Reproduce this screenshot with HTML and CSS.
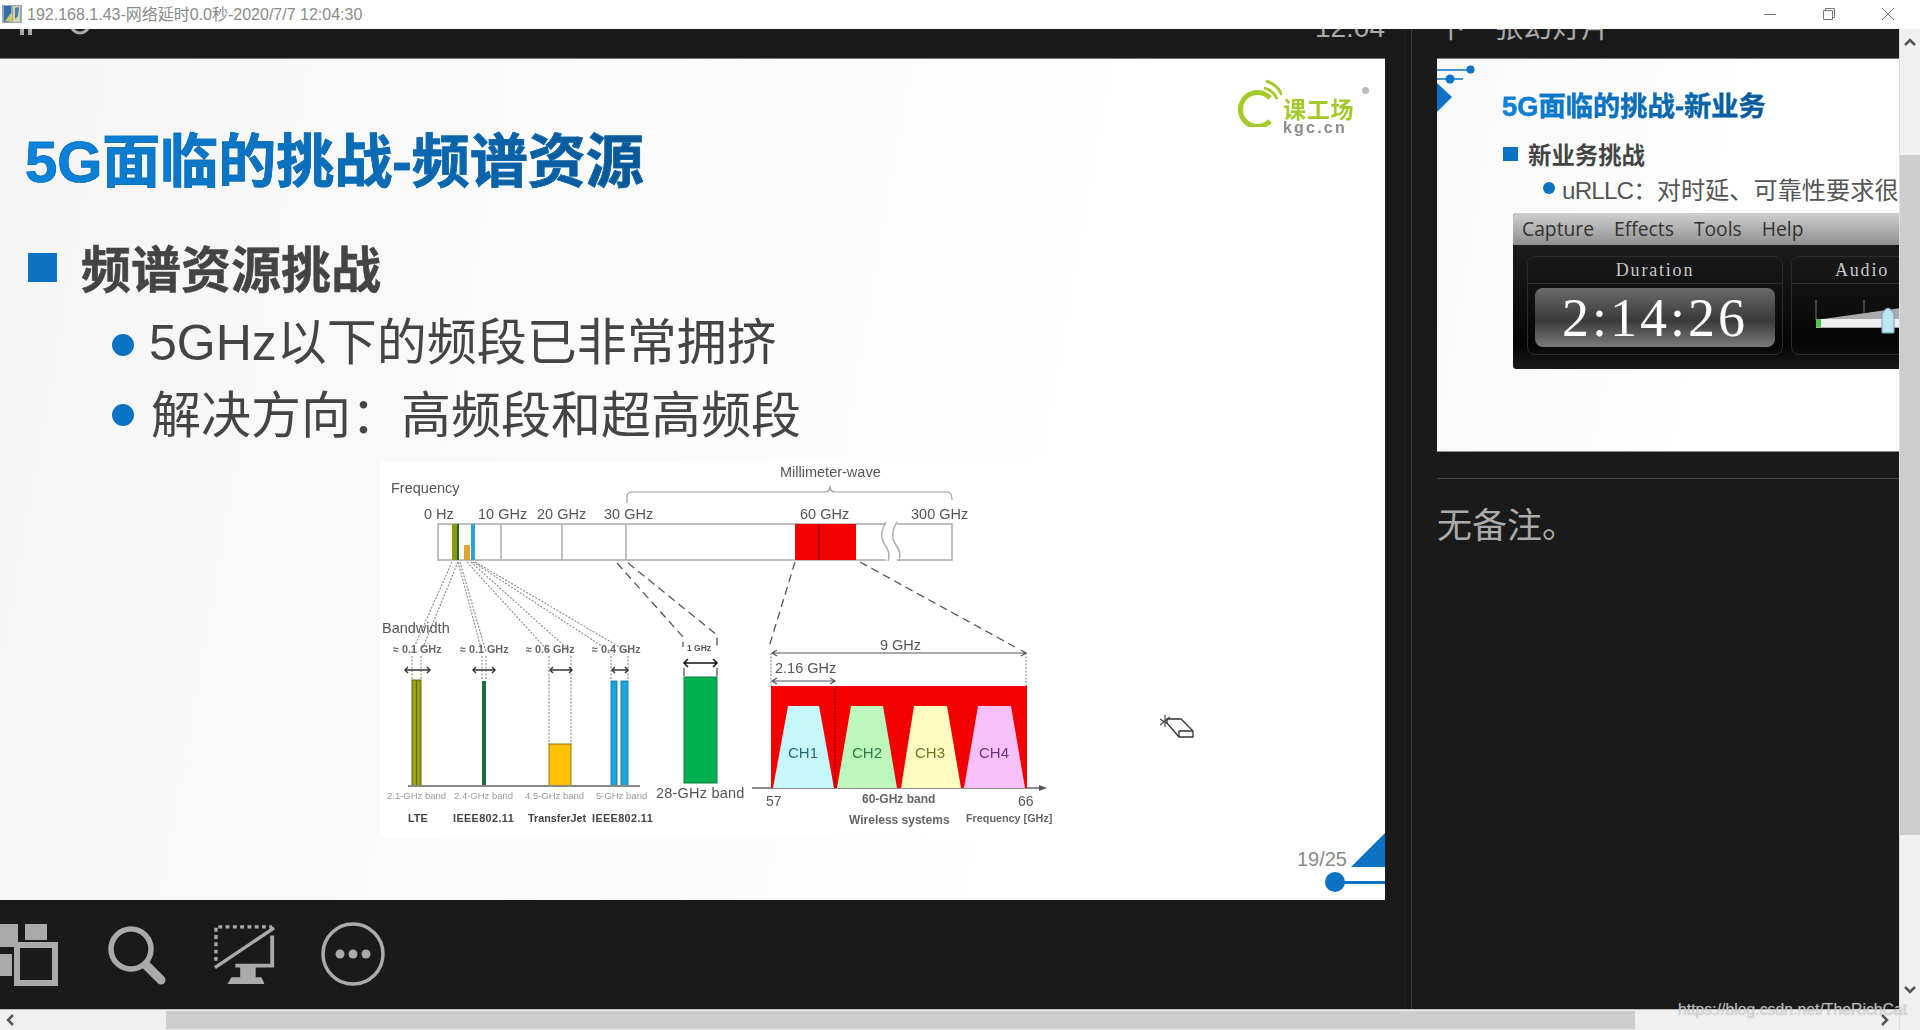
FILE: index.html
```html
<!DOCTYPE html>
<html lang="zh-CN">
<head>
<meta charset="utf-8">
<title>192.168.1.43-网络延时0.0秒-2020/7/7 12:04:30</title>
<link rel="stylesheet" href="styles.css">
</head>
<body>
<div class="window">
  <header class="titlebar">
    <svg class="app-icon" viewBox="0 0 20 20" width="20" height="20">
      <rect x="0" y="1" width="20" height="18" fill="#9aa7b5"/>
      <rect x="2" y="2" width="7" height="16" fill="#2f6ea8"/>
      <path d="M3 17 L9 9 L11 12 L9 18 Z" fill="#d8c860"/>
      <rect x="11" y="2" width="7" height="16" fill="#cfd6a8"/>
      <path d="M13 4 L17 3 L16 12 L13 15 Z" fill="#4d7fb5"/>
    </svg>
    <span class="window-title">192.168.1.43-网络延时0.0秒-2020/7/7 12:04:30</span>
    <div class="window-controls">
      <svg viewBox="0 0 14 14" width="14" height="14"><path d="M1 7.5H13" class="ctl"/></svg>
      <svg viewBox="0 0 14 14" width="14" height="14"><path d="M1.5 3.5H10.5V12.5H1.5Z M3.5 3.5V1.5H12.5V10.5H10.5" class="ctl"/></svg>
      <svg viewBox="0 0 14 14" width="14" height="14"><path d="M1 1L13 13M13 1L1 13" class="ctl"/></svg>
    </div>
  </header>

  <main class="app">
    <section class="stage">
      <div class="strip">
        <svg class="strip-icons" viewBox="0 0 100 29" width="100" height="29">
          <rect x="20" y="0" width="4" height="6" fill="#aaa"/>
          <rect x="28" y="0" width="4" height="6" fill="#aaa"/>
          <circle cx="80" cy="-5" r="9" fill="none" stroke="#aaa" stroke-width="3"/>
        </svg>
        <span class="clock">12:04</span>
      </div>

      <article class="slide">
        <div class="slide-text">
          <h1 class="slide-title">5G面临的挑战-频谱资源</h1>
          <h2 class="slide-heading"><i class="square"></i>频谱资源挑战</h2>
          <p class="slide-bullet"><i class="dot"></i><span class="tight">5GHz以下的频段已非常拥挤</span></p>
          <p class="slide-bullet"><i class="dot"></i><span>解决方向：高频段和超高频段</span></p>
        </div>

        <svg class="diagram" viewBox="380 460 700 380" width="700" height="380">
          <rect x="380" y="462" width="690" height="375" fill="#fff"/>

          <text x="391" y="493" class="d15">Frequency</text>
          <text x="424" y="519" class="d15">0 Hz</text>
          <text x="478" y="519" class="d15">10 GHz</text>
          <text x="537" y="519" class="d15">20 GHz</text>
          <text x="604" y="519" class="d15">30 GHz</text>
          <text x="800" y="519" class="d15">60 GHz</text>
          <text x="911" y="519" class="d15">300 GHz</text>
          <text x="780" y="477" class="d15">Millimeter-wave</text>

          <path d="M627 503V497Q627 492 632 492H825Q830 492 830 486Q830 492 835 492H947Q952 492 952 500" fill="none" stroke="#999" stroke-width="1.2"/>

          <rect x="438" y="524" width="514" height="36" fill="#fff" stroke="#aaa" stroke-width="1.5"/>
          <path d="M501 524V560M562 524V560M626 524V560" stroke="#aaa" stroke-width="1.5"/>
          <rect x="452" y="524" width="5" height="36" fill="#8a9a10"/>
          <rect x="457" y="524" width="2" height="36" fill="#22633a"/>
          <rect x="464" y="545" width="6" height="15" fill="#e0a52c"/>
          <rect x="471" y="524" width="4" height="36" fill="#29a3d8"/>
          <rect x="795" y="524" width="61" height="36" fill="#f40000"/>
          <path d="M819 524V560" stroke="#7a0000" stroke-width="1.2"/>
          <rect x="886" y="522" width="11" height="40" fill="#fff"/>
          <path d="M886 522Q878 535 885 545Q891 553 888 561M897 522Q889 535 896 545Q902 553 899 561" fill="none" stroke="#aaa" stroke-width="1.4"/>

          <g class="dotted">
            <path d="M452 562L412 652M458 562L421 652M458 562L482 652M460 562L486 652M467 562L549 652M471 562L571 652M473 562L611 652M475 562L628 652"/>
            <path d="M412 656V680M421 656V680M482 656V680M486 656V680M549 656V744M571 656V744M611 656V680M628 656V680"/>
            <path d="M771 653V686M1026 653V686"/>
          </g>
          <g class="dashed">
            <path d="M617 563L683 637V647M628 563L717 635V647"/>
            <path d="M684 668V677M717 668V677"/>
            <path d="M795 562L769 647M860 562L1015 647"/>
          </g>

          <text x="382" y="633" class="d15">Bandwidth</text>
          <text x="393" y="653" class="d11">≈ 0.1 GHz</text>
          <text x="460" y="653" class="d11">≈ 0.1 GHz</text>
          <text x="526" y="653" class="d11">≈ 0.6 GHz</text>
          <text x="592" y="653" class="d11">≈ 0.4 GHz</text>
          <text x="687" y="651" class="d9">1 GHz</text>

          <g class="arrows">
            <path d="M405 670H430M473 670H495M550 670H572M612 670H628"/>
            <path d="M408 667L405 670L408 673M427 667L430 670L427 673M476 667L473 670L476 673M492 667L495 670L492 673M553 667L550 670L553 673M569 667L572 670L569 673M615 667L612 670L615 673M625 667L628 670L625 673"/>
          </g>
          <path d="M684 663H717M688 659L684 663L688 667M713 659L717 663L713 667" fill="none" stroke="#111" stroke-width="1.5"/>

          <rect x="412" y="680" width="9" height="106" fill="#9aa010" stroke="#5d6a10"/>
          <path d="M416.5 680V786" stroke="#5d6a10"/>
          <rect x="482" y="681" width="4" height="105" fill="#1f6b3a"/>
          <rect x="549" y="744" width="22" height="42" fill="#ffc000" stroke="#927500"/>
          <rect x="611" y="681" width="6" height="105" fill="#19a5e0" stroke="#17698e" stroke-width=".8"/>
          <rect x="621" y="681" width="7" height="105" fill="#19a5e0" stroke="#17698e" stroke-width=".8"/>
          <rect x="684" y="677" width="33" height="106" fill="#00b050" stroke="#128043"/>
          <path d="M408 786H640" stroke="#888" stroke-width="2"/>
          <path d="M752 788H1042" stroke="#666" stroke-width="1.5"/>
          <path d="M1047 788L1039 785V791Z" fill="#555"/>

          <text x="387" y="799" class="d10 muted">2.1-GHz band</text>
          <text x="454" y="799" class="d10 muted">2.4-GHz band</text>
          <text x="525" y="799" class="d10 muted">4.5-GHz band</text>
          <text x="596" y="799" class="d10 muted">5-GHz band</text>
          <text x="656" y="798" class="d15 wide">28-GHz band</text>
          <text x="408" y="822" class="d10b">LTE</text>
          <text x="453" y="822" class="d10b ieee">IEEE802.11</text>
          <text x="528" y="822" class="d10b">TransferJet</text>
          <text x="592" y="822" class="d10b ieee">IEEE802.11</text>

          <text x="880" y="650" class="d15">9 GHz</text>
          <path d="M772 653H1026M777 650L772 653L777 656M1021 650L1026 653L1021 656" fill="none" stroke="#555" stroke-width="1.2"/>
          <text x="775" y="673" class="d15">2.16 GHz</text>
          <path d="M772 681H835M777 678L772 681L777 684M830 678L835 681L830 684" fill="none" stroke="#555" stroke-width="1.2"/>

          <rect x="771" y="686" width="256" height="102" fill="#f40000"/>
          <path d="M835 686V788" stroke="#7a0000" stroke-dasharray="2 1"/>
          <path d="M788 706H819L834 788H773Z" fill="#c5f7fb"/>
          <path d="M851 706H883L897 788H837Z" fill="#bdf7bd"/>
          <path d="M914 706H947L961 788H901Z" fill="#fcfcc0"/>
          <path d="M978 706H1011L1025 788H964Z" fill="#f8c0f8"/>
          <text x="803" y="758" class="ch ch1">CH1</text>
          <text x="867" y="758" class="ch ch2">CH2</text>
          <text x="930" y="758" class="ch ch3">CH3</text>
          <text x="994" y="758" class="ch ch4">CH4</text>

          <text x="766" y="806" class="d14">57</text>
          <text x="1018" y="806" class="d14">66</text>
          <text x="862" y="803" class="d12b">60-GHz band</text>
          <text x="849" y="824" class="d12b">Wireless systems</text>
          <text x="966" y="822" class="d11">Frequency [GHz]</text>
        </svg>

        <div class="logo">
          <svg class="logo-mark" viewBox="0 0 44 48" width="44" height="48">
            <path d="M32 19A17 17 0 1 0 32 42" fill="none" stroke="#a4c92b" stroke-width="5"/>
            <path d="M26 9Q35 11 39 20M28 2Q39 5 44 16" fill="none" stroke="#a4c92b" stroke-width="3"/>
          </svg>
          <div class="logo-words">
            <span class="logo-cn">课工场</span>
            <span class="logo-en">kgc.cn</span>
          </div>
          <i class="logo-reg"></i>
        </div>

        <div class="pager">
          <span class="pager-num">19/25</span>
          <i class="pager-tri"></i>
          <i class="pager-dot"></i>
          <i class="pager-line"></i>
        </div>

        <svg class="eraser" viewBox="0 0 40 30" width="40" height="30">
          <path d="M5 2L5 14M0 6L10 12M0 12L10 4" stroke="#444" stroke-width="1.2" fill="none"/>
          <path d="M7 6H21L33 18V24H19L7 10Z" fill="#fff" stroke="#333" stroke-width="1.3"/>
          <path d="M19 24V18H33" fill="none" stroke="#333" stroke-width="1.3"/>
        </svg>
      </article>

      <nav class="tools">
        <svg viewBox="0 0 64 66" width="64" height="66">
          <rect x="0" y="3" width="18" height="23" fill="#aaa"/>
          <rect x="25" y="3" width="22" height="16" fill="#aaa"/>
          <rect x="0" y="33" width="12" height="22" fill="#aaa"/>
          <rect x="17" y="24" width="38" height="38" fill="none" stroke="#aaa" stroke-width="6"/>
        </svg>
        <svg viewBox="0 0 64 66" width="64" height="66">
          <circle cx="24" cy="28" r="20" fill="none" stroke="#aaa" stroke-width="5.500"/>
          <path d="M39 44L54 59" stroke="#aaa" stroke-width="9" stroke-linecap="round"/>
        </svg>
        <svg viewBox="0 0 66 66" width="64" height="66">
          <path d="M2 40V5H60" fill="none" stroke="#aaa" stroke-width="3.500" stroke-dasharray="4 3.500"/>
          <path d="M1 47L62 6" stroke="#aaa" stroke-width="3.500"/>
          <path d="M60 14V45H22" fill="none" stroke="#aaa" stroke-width="4"/>
          <path d="M27 45H43V57H49L52 64H14L18 57H27Z" fill="#aaa"/>
        </svg>
        <svg viewBox="0 0 64 66" width="64" height="66">
          <circle cx="32" cy="33" r="30" fill="none" stroke="#aaa" stroke-width="3.500"/>
          <circle cx="19" cy="33" r="4.500" fill="#aaa"/>
          <circle cx="32" cy="33" r="4.500" fill="#aaa"/>
          <circle cx="45" cy="33" r="4.500" fill="#aaa"/>
        </svg>
      </nav>
    </section>

    <aside class="side">
      <div class="strip"><span class="next">下一张幻灯片</span></div>
      <div class="preview">
        <svg class="preview-deco" viewBox="0 0 40 56" width="40" height="56">
          <path d="M0 11H33M0 20H26" stroke="#0b72c4" stroke-width="1.500"/>
          <circle cx="33.500" cy="10.500" r="4" fill="#0b72c4"/>
          <circle cx="13" cy="20" r="4.500" fill="#0b72c4"/>
          <path d="M0 24L15 38L0 53Z" fill="#0b72c4"/>
        </svg>
        <h3 class="preview-title">5G面临的挑战-新业务</h3>
        <h4 class="preview-heading"><i class="preview-square"></i>新业务挑战</h4>
        <p class="preview-bullet"><i class="preview-dot"></i><span class="preview-latin">uRLLC：</span><span>对时延、可靠性要求很高</span></p>

        <div class="capture">
          <div class="capture-menu"><span>Capture</span><span>Effects</span><span>Tools</span><span>Help</span></div>
          <div class="capture-body">
            <div class="panel panel-duration">
              <div class="panel-head">Duration</div>
              <div class="timer">2:14:26</div>
            </div>
            <div class="panel panel-audio">
              <div class="panel-head">Audio</div>
              <svg class="meter" viewBox="0 0 108 60" width="108" height="60">
                <path d="M24 36L108 24V44H24Z" fill="#aaa"/>
                <path d="M24 16V36M72 16V30" stroke="#777"/>
                <rect x="24" y="35" width="84" height="8" fill="#eee"/>
                <rect x="24" y="35" width="5" height="8" fill="#4fc24f"/>
                <path d="M90 30Q96 18 102 30V49H90Z" fill="#bfe4f2" stroke="#6aa7bd"/>
              </svg>
            </div>
          </div>
        </div>
      </div>
      <hr class="side-rule">
      <p class="notes">无备注。</p>
    </aside>
  </main>

  <div class="vbar">
    <svg viewBox="0 0 12 8" width="12" height="8"><path d="M1 7L6 2L11 7" class="chev"/></svg>
    <i class="vthumb"></i>
    <svg viewBox="0 0 12 8" width="12" height="8"><path d="M1 1L6 6L11 1" class="chev"/></svg>
  </div>
  <div class="hbar">
    <svg viewBox="0 0 8 12" width="8" height="12"><path d="M7 1L2 6L7 11" class="chev"/></svg>
    <i class="hthumb"></i>
    <svg viewBox="0 0 8 12" width="8" height="12"><path d="M1 1L6 6L1 11" class="chev"/></svg>
  </div>

  <span class="watermark">https://blog.csdn.net/TheRichCat</span>
</div>
</body>
</html>
```
FILE: styles.css
```css
* { box-sizing: border-box; }
html, body { margin: 0; height: 100%; overflow: hidden; }
body { font-family: "Liberation Sans", "Noto Sans CJK SC", sans-serif; background: #1a1a1a; }
h1, h2, h3, h4, p, hr { margin: 0; }
i { display: block; }

.window {
  position: relative;
  width: 1920px;
  height: 1030px;
  display: grid;
  grid-template-columns: 1899px 21px;
  grid-template-rows: 29px 980px 21px;
}

/* title bar */
.titlebar {
  grid-column: 1 / 3;
  display: flex;
  align-items: center;
  padding: 0 0 1px 2px;
  background: #fff;
}
.app-icon { flex: none; }
.window-title { margin: 0 0 3px 5px; font-size: 16px; color: #8a8a8a; white-space: nowrap; }
.window-controls { margin-left: auto; margin-right: 25px; display: flex; gap: 45px; }
.ctl { fill: none; stroke: #777; stroke-width: 1; }

/* main area */
.app { display: flex; background: #1a1a1a; overflow: hidden; }
.stage {
  flex: none;
  width: 1412px;
  border-right: 1px solid #3d3d3d;
  background: linear-gradient(#242424, #242424) no-repeat 1404px 0 / 1px 100%;
}
.strip {
  display: flex;
  align-items: flex-start;
  height: 29px;
  width: 1385px;
  padding-bottom: 16px;
  overflow: hidden;
  color: #aaa;
}
.strip-icons { flex: none; }
.clock { align-self: flex-end; margin-left: auto; font-size: 28px; line-height: 28px; }

/* slide */
.slide {
  position: relative;
  width: 1385px;
  height: 842px;
  overflow: hidden;
  background: linear-gradient(100deg, #f5f5f5 0%, #fbfbfb 45%, #fff 75%);
  border-top: 1px solid #777;
}
.slide-text { padding: 68px 0 0 25px; filter: blur(.6px); }
.slide-title {
  width: fit-content;
  font-size: 58px;
  line-height: 70px;
  font-weight: 700;
  background: linear-gradient(90deg, #0a84dc, #0a5796);
  -webkit-background-clip: text;
  background-clip: text;
  color: transparent;
  -webkit-text-stroke: .7px #0a6bb5;
}
.slide-heading {
  display: flex;
  align-items: center;
  height: 60px;
  margin-top: 39px;
  font-size: 50px;
  font-weight: 700;
  color: #444;
  -webkit-text-stroke: .5px #444;
}
.square { width: 29px; height: 29px; margin: 3px 24px 0 3px; background: #0b72c4; }
.slide-bullet {
  display: flex;
  align-items: center;
  height: 73px;
  padding-left: 87px;
  font-size: 50px;
  color: #444;
  white-space: nowrap;
}
.slide-bullet:first-of-type { margin-top: 5px; }
.tight { margin-left: -2px; }
.dot { width: 22px; height: 22px; margin: 15px 17px 0 0; border-radius: 50%; background: #0b72c4; flex: none; }
.slide-bullet + .slide-bullet .dot { margin-top: 8px; }
.diagram { display: block; margin: 13px 0 0 380px; filter: blur(.55px); }

.d15 { font-size: 14.500px; fill: #555; }
.d14 { font-size: 14px; fill: #555; }
.d11 { font-size: 10.800px; font-weight: 700; fill: #666; }
.d9 { font-size: 8.500px; font-weight: 700; fill: #555; }
.d10 { font-size: 9.500px; }
.d10b { font-size: 10.800px; font-weight: 700; fill: #444; }
.ieee { letter-spacing: .4px; }
.d12b { font-size: 12px; font-weight: 700; fill: #666; }
.muted { fill: #999; }
.wide { letter-spacing: .2px; }
.ch { font-size: 15px; text-anchor: middle; }
.ch1 { fill: #2a6a7a; }
.ch2 { fill: #2e7a4a; }
.ch3 { fill: #6e7a2a; }
.ch4 { fill: #663a78; }
.dotted path { fill: none; stroke: #888; stroke-width: 1.100; stroke-dasharray: 2 1.500; }
.dashed path { fill: none; stroke: #555; stroke-width: 1.300; stroke-dasharray: 8 5; }
.arrows path { fill: none; stroke: #333; stroke-width: 1.400; }

/* logo */
.logo { position: absolute; left: 1238px; top: 20px; display: flex; filter: blur(.6px); }
.logo-mark { flex: none; }
.logo-words { display: flex; flex-direction: column; margin: 21px 0 0 1px; }
.logo-cn { font-size: 23px; line-height: 20px; font-weight: 700; letter-spacing: .8px; color: #a4c92b; white-space: nowrap; }
.logo-en { margin-top: 1px; font-size: 16px; line-height: 13px; font-weight: 700; letter-spacing: 2.200px; color: #8c8c8c; white-space: nowrap; }
.logo-reg { width: 7px; height: 7px; margin: 8px 0 0 8px; border-radius: 50%; background: #bbb; }

/* pager */
.pager { position: absolute; right: 0; bottom: 0; width: 100px; height: 70px; }
.pager-num { position: absolute; right: 38px; top: 17px; font-size: 20px; line-height: 24px; color: #8a8a8a; }
.pager-tri {
  position: absolute;
  right: 0;
  top: 3px;
  width: 0;
  height: 0;
  border-left: 34px solid transparent;
  border-bottom: 34px solid #0b72c4;
}
.pager-dot { position: absolute; right: 40px; top: 42px; width: 20px; height: 20px; border-radius: 50%; background: #0b72c4; }
.pager-line { position: absolute; right: 0; top: 51px; width: 45px; height: 3px; background: #0b72c4; }

.eraser { position: absolute; left: 1160px; top: 654px; }

/* bottom tools */
.tools { display: flex; gap: 43px; height: 109px; padding-top: 21px; }
.tools svg { flex: none; }

/* right column */
.side { flex: 1; min-width: 0; padding-left: 25px; color: #aaa; }
.next { align-self: flex-end; font-size: 28.800px; line-height: 28px; white-space: nowrap; font-family: "Noto Sans CJK SC", sans-serif; }
.side .strip { width: auto; padding-bottom: 18px; }
.preview {
  position: relative;
  height: 394px;
  overflow: hidden;
  padding: 30px 0 0 65px;
  background: linear-gradient(100deg, #f8f8f8, #fff 60%);
  border-top: 1px solid #777;
  border-bottom: 1px solid #888;
}
.preview-deco { position: absolute; left: 0; top: 0; }
.preview-title {
  width: fit-content;
  font-size: 27.300px;
  line-height: 36px;
  font-weight: 700;
  background: linear-gradient(90deg, #0a84dc, #0a5796);
  -webkit-background-clip: text;
  background-clip: text;
  color: transparent;
  -webkit-text-stroke: .3px #0a6bb5;
}
.preview-heading {
  display: flex;
  align-items: center;
  height: 30px;
  margin-top: 14px;
  font-size: 23.400px;
  font-weight: 700;
  color: #444;
}
.preview-square { width: 15px; height: 14px; margin: 0 10px 0 1px; background: #0b72c4; }
.preview-bullet {
  display: flex;
  align-items: center;
  height: 38px;
  padding-left: 41px;
  font-size: 24.200px;
  color: #555;
  white-space: nowrap;
}
.preview-latin { letter-spacing: -.8px; }
.preview-dot { width: 12px; height: 12px; margin-right: 7px; border-radius: 50%; background: #0b72c4; flex: none; }

.capture {
  position: absolute;
  left: 76px;
  top: 154px;
  width: 440px;
  height: 156px;
  border-radius: 4px 0 0 4px;
  overflow: hidden;
  background: #111;
}
.capture-menu {
  display: flex;
  gap: 20px;
  height: 32px;
  align-items: center;
  padding: 0 0 2px 9px;
  font-family: "Open Sans", sans-serif;
  font-size: 19.300px;
  color: #333;
  background: linear-gradient(#cfcfcf, #8f8f8f);
}
.capture-body {
  display: flex;
  gap: 8px;
  height: 124px;
  padding: 11px 0 0 14px;
  background: linear-gradient(#1c1c1c, #050505 80%, #1a1a1a);
}
.panel { height: 99px; border: 1px solid #2b2b2b; border-radius: 8px; flex: none; }
.panel-duration { width: 256px; padding: 0 7px; }
.panel-audio { width: 140px; overflow: hidden; }
.panel-head {
  height: 27px;
  margin: 0 -7px;
  border-bottom: 1px solid #2f2f2f;
  font-family: "Liberation Serif", serif;
  font-size: 18px;
  letter-spacing: 1.800px;
  line-height: 26px;
  text-align: center;
  color: #c8c8c8;
}
.panel-audio .panel-head { margin: 0; text-align: left; padding-left: 43px; }
.timer {
  height: 59px;
  margin-top: 4px;
  border-radius: 8px;
  font-family: "Liberation Serif", serif;
  font-size: 54px;
  line-height: 60px;
  letter-spacing: 3px;
  text-align: center;
  color: #fff;
  background: linear-gradient(#6a6a6a, #3a3a3a 55%, #7a7a7a);
}
.meter { display: block; }

.side-rule { height: 1px; margin-top: 26px; border: 0; background: #444; }
.notes { margin-top: 22px; font-size: 35px; line-height: 44px; color: #aaa; font-family: "Noto Sans CJK SC", sans-serif; }

/* scroll bars */
.vbar {
  grid-column: 2;
  grid-row: 2 / 4;
  display: flex;
  flex-direction: column;
  align-items: center;
  background: #f0f0f0;
  border-left: 1px solid #ddd;
  padding: 9px 0 13px;
}
.vthumb { align-self: stretch; height: 680px; margin: 109px 0 151px; background: #cdcdcd; flex: none; }
.hbar {
  grid-column: 1;
  grid-row: 3;
  display: flex;
  align-items: center;
  padding: 0 6px;
  background: #f0f0f0;
  border-top: 1px solid #bbb;
}
.hthumb { height: 18px; width: 1469px; margin: 0 246px 0 152px; background: #cdcdcd; flex: none; }
.chev { fill: none; stroke: #555; stroke-width: 2.500; }
.vbar svg, .hbar svg { flex: none; }

.watermark {
  position: absolute;
  left: 1678px;
  top: 1000px;
  font-size: 15.800px;
  line-height: 20px;
  color: rgba(255, 255, 255, .6);
  text-shadow: 0 0 1px rgba(120, 120, 120, .8);
  white-space: nowrap;
}
```
